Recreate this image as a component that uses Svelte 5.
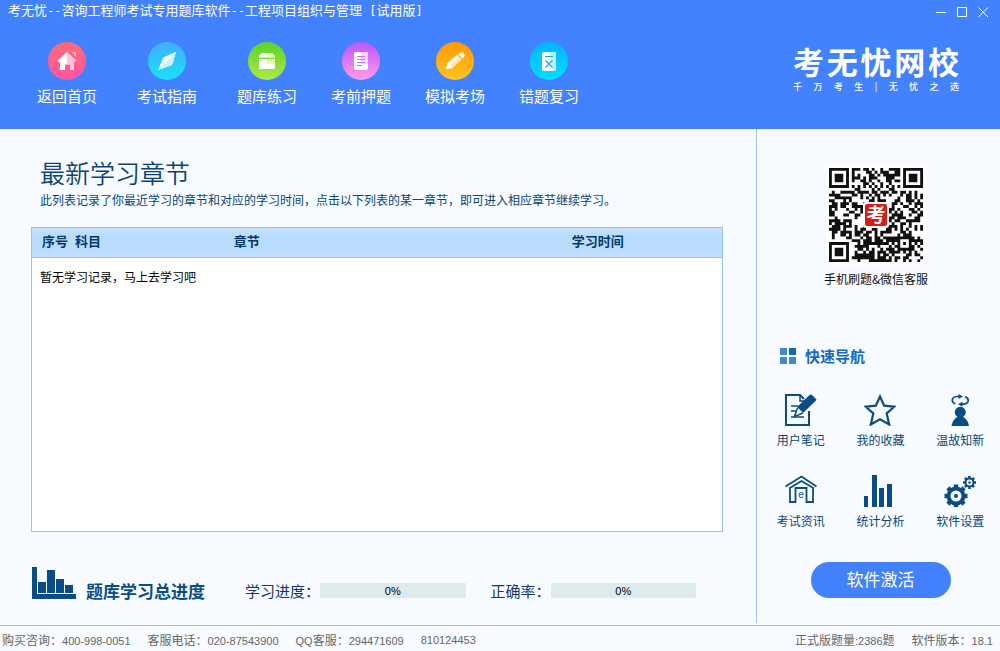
<script lang="ts">
  type NavItem = { icon: string; label: string; from: string; to: string };

  const mainNav: NavItem[] = [
    { icon: 'home', label: '返回首页', from: '#ff6b74', to: '#ff56a6' },
    { icon: 'compass', label: '考试指南', from: '#42aeff', to: '#16e2f8' },
    { icon: 'box', label: '题库练习', from: '#58d428', to: '#aee848' }
  ];

  const examNav: NavItem[] = [
    { icon: 'paper', label: '考前押题', from: '#bd55ff', to: '#ff9be6' },
    { icon: 'pencil', label: '模拟考场', from: '#ff9800', to: '#ffc522' },
    { icon: 'wrong', label: '错题复习', from: '#00b4ff', to: '#00dfff' }
  ];

  const navGroups = [mainNav, examNav];

  const shortcuts = [
    { icon: 'note', label: '用户笔记' },
    { icon: 'star', label: '我的收藏' },
    { icon: 'review', label: '温故知新' },
    { icon: 'news', label: '考试资讯' },
    { icon: 'stats', label: '统计分析' },
    { icon: 'gears', label: '软件设置' }
  ];

  const progress = [
    { label: '学习进度：', value: 0 },
    { label: '正确率：', value: 0 }
  ];

  const brandName = ['考', '无', '忧', '网', '校'];
  const slogan = ['千', '万', '考', '生', '|', '无', '忧', '之', '选'];

  const QR_SIZE = 33;

  function inFinder(x: number, y: number) {
    return (x < 8 && y < 8) || (x > QR_SIZE - 9 && y < 8) || (x < 8 && y > QR_SIZE - 9);
  }

  function isDark(x: number, y: number, noise: number) {
    if (inFinder(x, y)) {
      const cx = x < 8 ? 3 : QR_SIZE - 4;
      const cy = y < 8 ? 3 : QR_SIZE - 4;
      const d = Math.max(Math.abs(x - cx), Math.abs(y - cy));
      return d === 3 || d < 2;
    }
    const align = Math.max(Math.abs(x - 26), Math.abs(y - 26));
    if (align < 3) return align !== 1;
    if (x === 6 || y === 6) return (x + y) % 2 === 0;
    return noise > 0.46;
  }

  function buildQr() {
    let seed = 20;
    let d = '';
    for (let y = 0; y < QR_SIZE; y++) {
      for (let x = 0; x < QR_SIZE; x++) {
        seed = (seed * 16807) % 2147483647;
        if (isDark(x, y, seed / 2147483647)) d += `M${x} ${y}h1v1h-1z`;
      }
    }
    return d;
  }

  const qrPath = buildQr();

  const teeth = [0, 45, 90, 135, 180, 225, 270, 315];
</script>

<div class="window">
  <header class="header">
    <div class="titlebar">
      <h1 class="title">考无忧<span class="half">--</span>咨询工程师考试专用题库软件<span class="half">--</span>工程项目组织与管理<span class="half">&nbsp;[</span>试用版<span class="half">]</span></h1>
      <div class="controls">
        <button type="button" aria-label="最小化">
          <svg width="11" height="11" viewBox="0 0 11 11"><path d="M0 5.5h10" /></svg>
        </button>
        <button type="button" aria-label="最大化">
          <svg width="11" height="11" viewBox="0 0 11 11"><path d="M.5.5h9v9h-9z" /></svg>
        </button>
        <button type="button" aria-label="关闭">
          <svg width="11" height="11" viewBox="0 0 11 11"><path d="M.5.5l9.5 9.5M10 .5L.5 10" /></svg>
        </button>
      </div>
    </div>

    <div class="banner">
      <nav class="nav">
        {#each navGroups as group}
          <ul class="nav-group">
            {#each group as item}
              <li>
                <a href="#{item.icon}" class="nav-link">
                  <svg width="38" height="38" viewBox="0 0 38 38">
                    <defs>
                      <linearGradient id="bg-{item.icon}" x1="0" y1="0" x2="0" y2="1">
                        <stop offset="0" stop-color={item.from} />
                        <stop offset="1" stop-color={item.to} />
                      </linearGradient>
                    </defs>
                    <circle cx="19" cy="19" r="19" fill="url(#bg-{item.icon})" />
                    {#if item.icon === 'home'}
                      <path d="M24 10h4v5z" fill="#fff" opacity=".6" />
                      <path d="M19 10l9 8.5-1.5 1.5H26v7a1 1 0 0 1-1 1h-3v-5.5h-5V28h-4a1 1 0 0 1-1-1v-7h-1.5L10 18.5z" fill="#fff" />
                      <path d="M19 10l9 8.5-1.5 1.5H26v7a1 1 0 0 1-1 1h-3v-5.5h-3z" fill="#ffc4dc" />
                    {:else if item.icon === 'compass'}
                      <path d="M28 10L24 23 10 28l5.5-12.5z" fill="#fff" />
                      <path d="M28 10L10 28l14-5z" fill="#cdeefe" />
                      <path d="M28 10L15.5 15.5 14 19z" fill="#e4f6ff" />
                    {:else if item.icon === 'box'}
                      <path d="M11 15.5a4.5 4.5 0 0 1 4.5-4.5h7a4.5 4.5 0 0 1 4.5 4.5zM11 17h16v9a1 1 0 0 1-1 1H12a1 1 0 0 1-1-1z" fill="#fff" />
                      <path d="M19 11h3.5a4.5 4.5 0 0 1 4.5 4.5h-8zM19 17h8v5h-8z" fill="#e6fab0" />
                    {:else if item.icon === 'paper'}
                      <rect x="12" y="10" width="14" height="18" rx="2" fill="#fff" />
                      <path d="M19 10h5a2 2 0 0 1 2 2v10h-7z" fill="#f3d3ff" />
                      <path d="M15 14.5h8M15 17.5h8M15 20.5h8M15 23.5h5" stroke="#d36bf5" />
                    {:else if item.icon === 'pencil'}
                      <path d="M10 27l1.5-6L21 13l4.500 4.500-10 9z" fill="#fff" />
                      <path d="M22 12.200l1.500-1a2.900 2.900 0 0 1 4.200 4.200l-1.200 1.300z" fill="#fff4dc" />
                      <path d="M15 22l8-7 2.500 2.500-10 9z" fill="#ffe5b4" />
                    {:else}
                      <rect x="12" y="10" width="14" height="19" rx="2" fill="#fff" />
                      <path d="M19 10h5a2 2 0 0 1 2 2v15a2 2 0 0 1-2 2h-1z" fill="#bdf1ff" />
                      <path d="M15 14.5h8M15.5 18.5l7 7M22.5 18.5l-7 7" stroke="#16a9e0" stroke-width="1.2" />
                    {/if}
                  </svg>
                  <span>{item.label}</span>
                </a>
              </li>
            {/each}
          </ul>
        {/each}
      </nav>

      <div class="brand">
        <strong class="brand-name">
          {#each brandName as ch}<span>{ch}</span>{/each}
        </strong>
        <span class="brand-slogan">
          {#each slogan as ch}<span>{ch}</span>{/each}
        </span>
      </div>
    </div>
  </header>

  <div class="body">
    <main class="main">
      <div class="intro">
        <h2>最新学习章节</h2>
        <p>此列表记录了你最近学习的章节和对应的学习时间，点击以下列表的某一章节，即可进入相应章节继续学习。</p>
      </div>

      <div class="records">
        <table>
          <colgroup>
            <col class="col-no" />
            <col class="col-subject" />
            <col class="col-chapter" />
            <col />
          </colgroup>
          <thead>
            <tr>
              <th scope="col">序号</th>
              <th scope="col">科目</th>
              <th scope="col">章节</th>
              <th scope="col">学习时间</th>
            </tr>
          </thead>
          <tbody>
            <tr>
              <td colspan="4">暂无学习记录，马上去学习吧</td>
            </tr>
          </tbody>
        </table>
      </div>

      <section class="summary">
        <svg width="44" height="32" viewBox="0 0 44 32">
          <path d="M0 0h5v27h39v5H0zM6 15h8v11H6zM15 3h8v23h-8zM24 12h8v14h-8zM33 18h8v8h-8z" fill="#0a4c85" />
        </svg>
        <h3>题库学习总进度</h3>
        <div class="meters">
          {#each progress as item}
            <div class="meter">
              <span>{item.label}</span>
              <div class="track" role="progressbar" aria-label={item.label} aria-valuenow={item.value} aria-valuemin="0" aria-valuemax="100">
                <div class="fill" style="width: {item.value}%"></div>
                <span class="value">{item.value}%</span>
              </div>
            </div>
          {/each}
        </div>
      </section>
    </main>

    <aside class="sidebar">
      <figure class="qr">
        <svg width="100" height="100" viewBox="0 0 100 100" role="img" aria-label="二维码">
          <rect width="100" height="100" fill="#fff" />
          <g transform="translate(3 3) scale(2.85)">
            <path d={qrPath} fill="#111" />
          </g>
          <rect x="37" y="37" width="26" height="26" rx="3" fill="#fff" />
          <rect x="39" y="39" width="22" height="22" rx="2" fill="#d81d18" />
          <text x="50" y="57" text-anchor="middle" class="qr-mark">考</text>
        </svg>
        <figcaption>手机刷题&amp;微信客服</figcaption>
      </figure>

      <section class="quick">
        <h3>
          <svg width="16" height="16" viewBox="0 0 16 16">
            <path d="M0 0h7v7H0zM0 9h7v7H0zM9 9h7v7H9z" fill="#4089cf" />
            <path d="M9 0h7v7H9z" fill="#1467b6" />
          </svg>
          快速导航
        </h3>
        <ul>
          {#each shortcuts as item}
            <li>
              <a href="#{item.icon}">
                <svg width="32" height="32" viewBox="0 0 32 32" fill="none" stroke="#0a4c85" stroke-width="2">
                  {#if item.icon === 'note'}
                    <path d="M24 17v14H1V1h14l4 4" />
                    <path d="M15 1v6h4M6 12h7M6 17h5M6 23h13" stroke-width="1.5" />
                    <path d="M27 1l4 4a1 1 0 0 1 0 1.5L18 19l-6-6L24.5 1a2 2 0 0 1 2.5 0z" fill="#0a4c85" stroke="none" />
                    <path d="M12.5 14l-3 8.5 8.5-3.5" stroke-width="1.5" fill="#f7fbff" />
                  {:else if item.icon === 'star'}
                    <path d="M16 2.5l4.2 9.2 10 1-7.5 6.8 2.5 11L16 25.300 6.800 30.500l2.500-11L1.800 12.700l10-1z" stroke-width="2.200" />
                  {:else if item.icon === 'review'}
                    <path d="M15 2.500h-2C7 3 7 8.500 11.500 9.800M18 10.200h2c5.500-1 5.500-6 1-7.400" stroke-width="1.700" />
                    <path d="M14.500 0l4.500 2.500-4.500 2.500zM18.500 7.700l-4.500 2.500 4.500 2.500z" fill="#0a4c85" stroke="none" />
                    <path d="M13.500 23a5.500 5.500 0 1 1 5.500 0c3 1.500 5 4 6 9H7.500c1-5 3-7.500 6-9z" fill="#0a4c85" stroke="none" />
                  {:else if item.icon === 'news'}
                    <path d="M.5 11.500L16.500 1.500l15 10M5 13.500V27h5.500V13h11v14H28V13.500" stroke-width="1.800" />
                    <path d="M4 13.500L16.500 6 29 13.500" stroke-width="1.800" />
                    <text x="16" y="23" text-anchor="middle" class="news-mark">e</text>
                  {:else if item.icon === 'stats'}
                    <path d="M0 21h4v11H0zM8 0h5v32H8zM15 13h5v19h-5zM23 9h5v23h-5z" fill="#0a4c85" stroke="none" />
                  {:else}
                    <circle cx="12" cy="21" r="7.5" stroke-width="4" />
                    {#each teeth as angle}
                      <path d="M12 9.5v3" stroke-width="4.5" transform="rotate({angle} 12 21)" />
                      <path d="M25.5 1v2.5" stroke-width="2.5" transform="rotate({angle} 25.5 7.5)" />
                    {/each}
                    <circle cx="12" cy="21" r="2" fill="#0a4c85" stroke="none" />
                    <circle cx="25.5" cy="7.5" r="4" stroke-width="2" />
                    <circle cx="25.5" cy="7.5" r="1.2" fill="#0a4c85" stroke="none" />
                  {/if}
                </svg>
                <span>{item.label}</span>
              </a>
            </li>
          {/each}
        </ul>
      </section>

      <button type="button" class="activate">软件激活</button>
    </aside>
  </div>

  <footer class="footer">
    <div class="footer-group">
      <span>购买咨询：<span class="num">400-998-0051</span></span>
      <span>客服电话：<span class="num">020-87543900</span></span>
      <span><span class="num">QQ</span>客服：<span class="num">294471609</span></span>
      <span class="num">810124453</span>
    </div>
    <div class="footer-group">
      <span>正式版题量<span class="num">:2386</span>题</span>
      <span>软件版本：<span class="num">18.1</span></span>
    </div>
  </footer>
</div>

<style>
  :global(body) {
    margin: 0;
  }

  .window {
    --navy: #0a4478;
    --blue: #4282ff;
    display: flex;
    flex-direction: column;
    min-height: 100vh;
    background: #f7fbff;
    color: var(--navy);
    font-family: 'Noto Sans CJK SC', sans-serif;
    font-size: 12px;
    line-height: 16px;
  }

  h1,
  h2,
  h3,
  p,
  ul,
  figure {
    margin: 0;
    padding: 0;
  }

  ul {
    list-style: none;
  }

  a {
    color: inherit;
    text-decoration: none;
  }

  svg {
    display: block;
  }

  button {
    border: 0;
    padding: 0;
    font-family: inherit;
    color: #fff;
    cursor: pointer;
  }

  /* Header */
  .header {
    background: var(--blue);
    color: #fff;
    padding-bottom: 24px;
  }

  .titlebar {
    display: flex;
    justify-content: space-between;
    padding: 0 6px 0 8px;
  }

  .title {
    font-size: 13px;
    font-weight: 400;
    line-height: 19px;
  }

  .half {
    font-family: 'DejaVu Sans Mono', monospace;
    font-size: 12px;
  }

  .controls {
    display: flex;
  }

  .controls button {
    display: grid;
    place-items: center;
    width: 21px;
    height: 24px;
    background: none;
  }

  .controls svg {
    fill: none;
    stroke: #fff;
  }

  .banner {
    display: flex;
    justify-content: space-between;
    padding: 18px 41px 0 37px;
  }

  .nav {
    display: flex;
    gap: 34px;
  }

  .nav-group {
    display: flex;
    gap: 34px;
  }

  .nav-group:first-child {
    gap: 40px;
  }

  .nav-link {
    display: flex;
    flex-direction: column;
    align-items: center;
    gap: 7px;
    width: 60px;
    font-size: 15px;
    line-height: 18px;
    white-space: nowrap;
  }

  .brand {
    display: flex;
    flex-direction: column;
    width: 166px;
    gap: 2px;
  }

  .brand-name {
    display: flex;
    justify-content: space-between;
    font-size: 31px;
    font-weight: 700;
    line-height: 38px;
  }

  .brand-slogan {
    display: flex;
    justify-content: space-between;
    font-size: 9px;
    font-weight: 500;
    line-height: 10px;
  }

  /* Body */
  .body {
    flex: 1;
    display: grid;
    grid-template-columns: 1fr 244px;
    margin-bottom: 2px;
  }

  .main {
    display: flex;
    flex-direction: column;
    padding: 28px 33px 24px 31px;
  }

  .intro {
    padding: 0 9px 19px;
  }

  .intro h2 {
    margin-bottom: 5px;
    font-size: 25px;
    font-weight: 350;
    line-height: 30px;
  }

  .records {
    flex: 1;
    border: 1px solid #92c4f2;
    background: #fff;
  }

  table {
    width: 100%;
    border-collapse: collapse;
    table-layout: fixed;
  }

  .col-no {
    width: 33px;
  }

  .col-subject {
    width: 23%;
  }

  .col-chapter {
    width: 49%;
  }

  thead tr {
    background: linear-gradient(#c6e0ff, #badcff 30%, #badcff 75%, #c2dfff);
  }

  th {
    height: 29px;
    box-sizing: border-box;
    border-bottom: 1px solid #92c4f2;
    padding: 0 0 3px 10px;
    color: #003a6c;
    font-size: 13px;
    font-weight: 700;
    text-align: left;
    white-space: nowrap;
  }

  td {
    padding: 11px 8px;
    color: #000;
  }

  .summary {
    display: flex;
    align-items: flex-end;
    margin-top: 35px;
    padding: 0 27px 0 1px;
  }

  .summary h3 {
    margin: 0 40px 0 10px;
    color: #0a4c85;
    font-size: 17px;
    font-weight: 700;
    line-height: 16px;
    white-space: nowrap;
  }

  .meters {
    flex: 1;
    display: flex;
    gap: 25px;
  }

  .meter {
    flex: 1 1 auto;
    display: flex;
    font-size: 15px;
    color: #14356f;
    white-space: nowrap;
  }

  .track {
    position: relative;
    flex: 1;
    height: 15px;
    background: #deebed;
    text-align: center;
  }

  .fill {
    position: absolute;
    inset: 0 auto 0 0;
    background: #8cc9f0;
  }

  .value {
    position: relative;
    display: block;
    color: #000;
    font-family: 'Liberation Sans', sans-serif;
    font-size: 11px;
  }

  /* Sidebar */
  .sidebar {
    display: flex;
    flex-direction: column;
    border-left: 1px solid #a5c0e0;
    padding: 36px 0 25px 4px;
  }

  .qr {
    display: flex;
    flex-direction: column;
    align-items: center;
    gap: 6px;
    padding-right: 9px;
    color: #111;
  }

  .qr-mark {
    fill: #fff;
    font-size: 19px;
    font-weight: 700;
  }

  .quick {
    margin-top: 61px;
  }

  .quick h3 {
    display: flex;
    align-items: center;
    gap: 9px;
    margin: 0 0 30px 19px;
    color: #146abf;
    font-size: 15px;
    font-weight: 700;
  }

  .quick ul {
    display: grid;
    grid-template-columns: repeat(3, 1fr);
    row-gap: 27px;
  }

  .quick a {
    display: flex;
    flex-direction: column;
    align-items: center;
    gap: 6px;
  }

  .news-mark {
    fill: #0a4c85;
    stroke: none;
    font-family: 'Liberation Sans', sans-serif;
    font-size: 10px;
  }

  .activate {
    align-self: center;
    width: 140px;
    height: 36px;
    margin-top: auto;
    border-radius: 18px;
    padding-bottom: 3px;
    background: var(--blue);
    font-size: 17px;
  }

  /* Footer */
  .footer {
    display: flex;
    justify-content: space-between;
    border-top: 1px solid #a5bfdf;
    padding: 4px 7px 0 2px;
    color: #666;
    line-height: 20px;
  }

  .footer-group {
    display: flex;
    gap: 17px;
  }

  .num {
    font-family: 'Liberation Sans', sans-serif;
    font-size: 11px;
  }
</style>
